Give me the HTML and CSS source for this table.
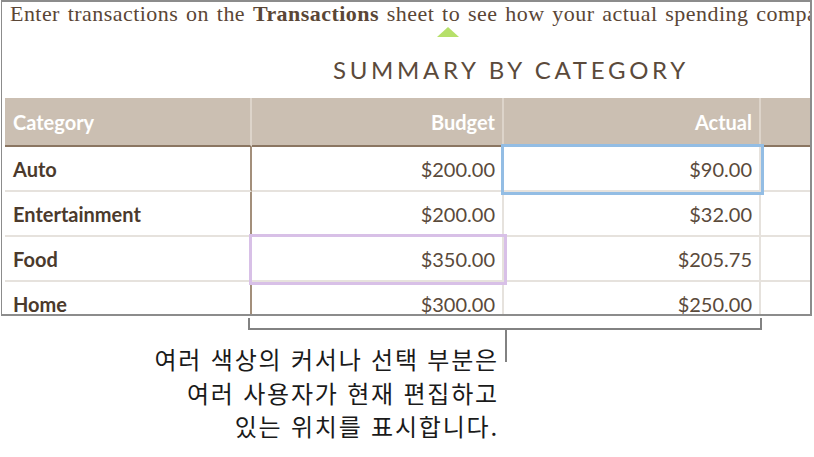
FILE: index.html
```html
<!DOCTYPE html>
<html lang="ko">
<head>
<meta charset="utf-8">
<link rel="stylesheet" href="styles.css">
</head>
<body>
<div class="frame">
  <p class="intro">Enter transactions on the <b>Transactions</b> sheet to see how your actual spending compared to your budget.</p>
  <span class="cursor-mark"></span>
  <h1 class="title">SUMMARY BY CATEGORY</h1>
  <div class="sheet">
    <div class="cell head">Category</div>
    <div class="cell head num">Budget</div>
    <div class="cell head num">Actual</div>
    <div class="cell head"></div>

    <div class="cell cat">Auto</div>
    <div class="cell num">$200.00</div>
    <div class="cell num sel-blue">$90.00</div>
    <div class="cell"></div>

    <div class="cell cat">Entertainment</div>
    <div class="cell num">$200.00</div>
    <div class="cell num">$32.00</div>
    <div class="cell"></div>

    <div class="cell cat">Food</div>
    <div class="cell num sel-purple">$350.00</div>
    <div class="cell num">$205.75</div>
    <div class="cell"></div>

    <div class="cell cat">Home</div>
    <div class="cell num">$300.00</div>
    <div class="cell num">$250.00</div>
    <div class="cell"></div>
  </div>
</div>
<div class="bracket"></div>
<div class="callout">
  <p class="callout-text">여러 색상의 커서나 선택 부분은<br>여러 사용자가 현재 편집하고<br>있는 위치를 표시합니다.</p>
  <span class="stem"></span>
</div>
</body>
</html>
```

FILE: styles.css
```css
html, body {
  margin: 0;
  padding: 0;
  background: #ffffff;
}

.frame {
  position: relative;
  box-sizing: border-box;
  width: 811px;
  height: 316px;
  margin-left: 1px;
  border: 2px solid #8c8c8c;
  border-left-width: 1px;
  overflow: hidden;
  background: #ffffff;
}

.intro {
  margin: 0;
  padding-left: 8px;
  font-family: "Liberation Serif", serif;
  font-size: 22px;
  line-height: 24px;
  letter-spacing: 0.45px;
  word-spacing: 1.9px;
  color: #5a4636;
  white-space: nowrap;
}

.intro b {
  font-weight: bold;
}

.cursor-mark {
  position: absolute;
  left: 435px;
  top: 25px;
  width: 0;
  height: 0;
  border-left: 11px solid transparent;
  border-right: 11px solid transparent;
  border-bottom: 10px solid #b6e06a;
}

.title {
  margin: 0;
  box-sizing: border-box;
  height: 72px;
  padding: 29px 0 0 331px;
  font-family: Lato, "Open Sans", sans-serif;
  font-weight: normal;
  font-size: 24px;
  line-height: 29px;
  letter-spacing: 3.7px;
  color: #5b4a3b;
  white-space: nowrap;
}

.sheet {
  display: grid;
  grid-template-columns: 247px 252px 257px 60px;
  grid-template-rows: 49px;
  grid-auto-rows: 45px;
  margin-left: 3px;
  width: 816px;
  font-family: Lato, "Open Sans", sans-serif;
  font-size: 20px;
  color: #5a4a3b;
}

.cell {
  display: flex;
  align-items: center;
  box-sizing: border-box;
  padding: 0 8px;
  border-right: 2px solid #e6e2dd;
  border-bottom: 2px solid #e6e2dd;
  background: #ffffff;
  white-space: nowrap;
}

.cell.num {
  justify-content: flex-end;
  padding-right: 7px;
}

.cell.head {
  background: #cbbfb2;
  color: #ffffff;
  font-weight: bold;
  border-right-color: #ddd4ca;
  border-bottom-color: #8b7662;
}

.sheet > .cell:nth-child(4n+1):not(.head) {
  border-right-color: #a38f7b;
}

.cell.cat {
  font-weight: bold;
  color: #4b3a2c;
}

.sel-blue {
  position: relative;
  z-index: 2;
  outline: 3px solid #93bde4;
  outline-offset: 0;
}

.sel-purple {
  position: relative;
  z-index: 2;
  outline: 3px solid #d8c0e7;
  outline-offset: 0;
}

.bracket {
  box-sizing: border-box;
  width: 514px;
  height: 12px;
  margin: 2px 0 0 248px;
  border: 2px solid #828282;
  border-top: none;
}

.callout {
  display: flex;
  align-items: flex-start;
  width: 507px;
}

.callout-text {
  flex: 1;
  margin: 0;
  padding-top: 12px;
  padding-right: 6px;
  text-align: right;
  font-family: "Noto Sans CJK KR", sans-serif;
  font-size: 24px;
  line-height: 33.5px;
  letter-spacing: 1.8px;
  color: #1a1a1a;
}

.stem {
  flex: none;
  width: 2px;
  height: 32px;
  background: #828282;
}
```
